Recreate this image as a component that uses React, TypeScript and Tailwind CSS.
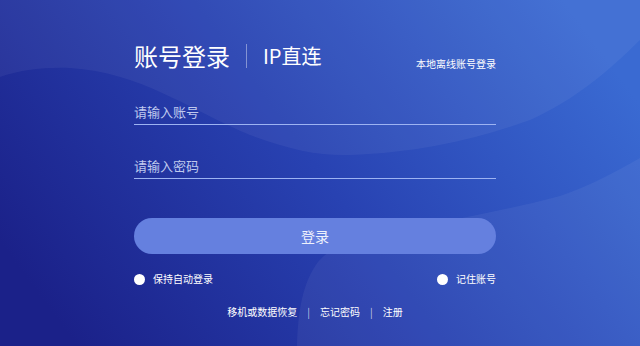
import React from 'react';

const font = '"Noto Sans CJK SC", "Noto Sans", sans-serif';

function Backdrop() {
  return (
    <svg
      className="absolute inset-0"
      width="640"
      height="346"
      viewBox="0 0 640 346"
      preserveAspectRatio="none"
    >
      <defs>
        <linearGradient id="bg" x1="0" y1="0.7" x2="1" y2="0.3">
          <stop offset="0" stopColor="#1b2189" />
          <stop offset="0.5" stopColor="#2842b2" />
          <stop offset="1" stopColor="#3a6ad2" />
        </linearGradient>
      </defs>
      <rect width="640" height="346" fill="url(#bg)" />
      {/* top wave */}
      <path
        d="M0,77 C20,70 45,67 70,68 C140,72 190,110 250,135 C290,150 320,156 350,155 C420,153 480,138 530,120 C575,100 610,70 640,40 L640,0 L0,0 Z"
        fill="#ffffff"
        fillOpacity="0.05"
      />
      {/* bottom-right blob */}
      <path
        d="M297,346 C298,310 303,282 318,262 C330,248 345,242 370,236 C430,224 500,212 560,196 C590,186 615,172 640,158 L640,346 Z"
        fill="#ffffff"
        fillOpacity="0.05"
      />
    </svg>
  );
}

function Field({ placeholder, className }: { placeholder: string; className: string }) {
  return (
    <input
      placeholder={placeholder}
      className={`block w-full h-[25px] bg-transparent border-b border-[#9db3f2] text-[13px] leading-[22px] pb-[2px] text-white placeholder:text-[#bfc9ee] outline-none ${className}`}
      style={{ fontFamily: font }}
    />
  );
}

function Radio({ label }: { label: string }) {
  return (
    <label className="flex items-center gap-[8px] cursor-pointer">
      <span className="block w-[11px] h-[11px] rounded-full bg-white" />
      <span className="text-[10px] leading-[14px] text-white">{label}</span>
    </label>
  );
}

export default function App() {
  return (
    <div
      className="relative w-[640px] h-[346px] overflow-hidden text-white"
      style={{ fontFamily: font }}
    >
      <Backdrop />
      <div className="relative ml-[134px] w-[362px] pt-[42px]">
        <div className="flex items-center h-[28px]">
          <span className="text-[24px] leading-[28px]">账号登录</span>
          <span className="mx-[16px] w-px h-[24px] bg-white/40" />
          <span className="text-[20px] leading-[28px]">IP直连</span>
          <span className="ml-auto self-end text-[10px] leading-[12px]">
            本地离线账号登录
          </span>
        </div>

        <Field placeholder="请输入账号" className="mt-[30px]" />
        <Field placeholder="请输入密码" className="mt-[29px]" />

        <button
          type="button"
          className="mt-[39px] w-full h-[36px] rounded-[18px] bg-[#6580df] text-[14px] text-[#eef1fc]"
        >
          登录
        </button>

        <div className="mt-[18px] flex items-center justify-between h-[14px]">
          <Radio label="保持自动登录" />
          <Radio label="记住账号" />
        </div>

        <div className="mt-[19px] flex items-center justify-center gap-[10px] text-[10px] leading-[14px]">
          <a>移机或数据恢复</a>
          <span className="text-white/70">|</span>
          <a>忘记密码</a>
          <span className="text-white/70">|</span>
          <a>注册</a>
        </div>
      </div>
    </div>
  );
}
